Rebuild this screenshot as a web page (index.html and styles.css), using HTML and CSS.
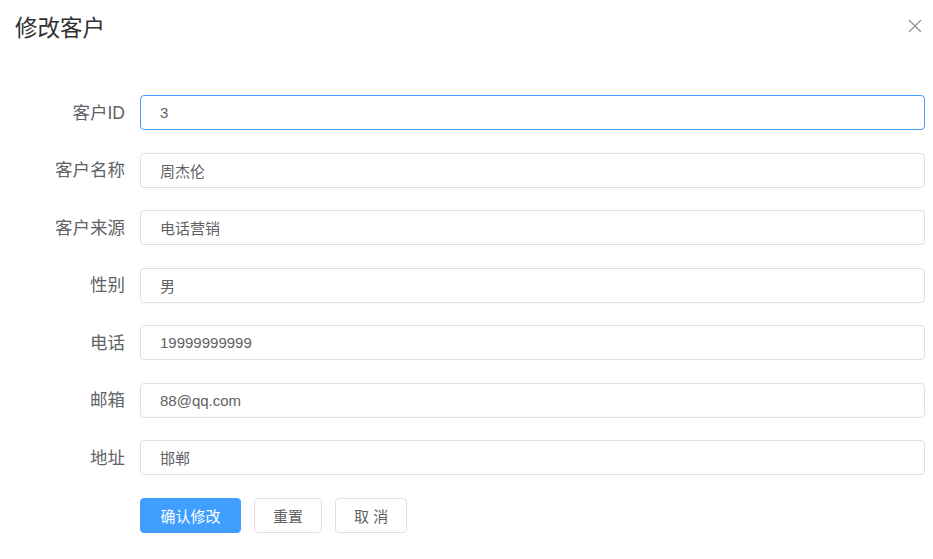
FILE: index.html
```html
<!DOCTYPE html>
<html lang="zh-CN">
<head>
    <meta charset="UTF-8">
    <title>修改客户</title>
    <link rel="stylesheet" href="styles.css">
</head>
<body>
    <div class="dialog">
        <div class="dialogHeader">
            <span class="dialogTitle">修改客户</span>
            <button class="closeBtn" type="button" aria-label="Close">
                <svg width="14" height="14" viewBox="0 0 14 14">
                    <path d="M1 1 L13 13 M13 1 L1 13" stroke="#909399" stroke-width="1.3" fill="none"/>
                </svg>
            </button>
        </div>
        <form class="editForm">
            <div class="formItem">
                <label class="formLabel">客户ID</label>
                <input class="formInput focused" type="text" value="3">
            </div>
            <div class="formItem">
                <label class="formLabel">客户名称</label>
                <input class="formInput" type="text" value="周杰伦">
            </div>
            <div class="formItem">
                <label class="formLabel">客户来源</label>
                <input class="formInput" type="text" value="电话营销">
            </div>
            <div class="formItem">
                <label class="formLabel">性别</label>
                <input class="formInput" type="text" value="男">
            </div>
            <div class="formItem">
                <label class="formLabel">电话</label>
                <input class="formInput" type="text" value="19999999999">
            </div>
            <div class="formItem">
                <label class="formLabel">邮箱</label>
                <input class="formInput" type="text" value="88@qq.com">
            </div>
            <div class="formItem">
                <label class="formLabel">地址</label>
                <input class="formInput" type="text" value="邯郸">
            </div>
            <div class="formItem">
                <span class="formLabel"></span>
                <div class="btnGroup">
                    <button class="btn primary" type="button">确认修改</button>
                    <button class="btn" type="button">重置</button>
                    <button class="btn" type="button">取 消</button>
                </div>
            </div>
        </form>
    </div>
</body>
</html>
```
FILE: styles.css
```css
*{
    margin:0;
    padding:0;
    box-sizing:border-box;
}

body{
    background:#fff;
    font-family:"Liberation Sans","Noto Sans CJK SC",sans-serif;
    color:#606266;
}

.dialog{
    width:933px;
    height:559px;
    background:#fff;
}

.dialogHeader{
    display:flex;
    justify-content:space-between;
    align-items:center;
    padding:13px 10px 0 15px;
    height:44px;
}

.dialogTitle{
    font-size:22.5px;
    line-height:30px;
    color:#303133;
}

.closeBtn{
    border:none;
    background:none;
    width:14px;
    height:14px;
    margin-top:-6px;
    margin-right:1px;
    cursor:pointer;
}

.closeBtn svg{
    display:block;
}

.editForm{
    margin-top:51px;
    padding-right:8px;
}

.formItem{
    display:flex;
    align-items:center;
    height:35px;
    margin-bottom:22.5px;
}

.formLabel{
    width:140px;
    flex-shrink:0;
    padding-right:15px;
    margin-top:-3px;
    text-align:right;
    font-size:17.5px;
    color:#606266;
}

.formInput{
    flex:1;
    height:35px;
    border:1px solid #dcdfe6;
    border-radius:4px;
    padding:0 19px;
    font-family:"Liberation Sans","Noto Sans CJK SC",sans-serif;
    font-size:15px;
    color:#606266;
    outline:none;
    background:#fff;
}

.formInput.focused{
    border-color:#409eff;
}

.btnGroup{
    display:flex;
    gap:13px;
}

.btn{
    height:35px;
    padding:0 18px;
    border:1px solid #dcdfe6;
    border-radius:4px;
    background:#fff;
    color:#606266;
    font-family:"Liberation Sans","Noto Sans CJK SC",sans-serif;
    font-size:15px;
    cursor:pointer;
}

.btn.primary{
    padding:0 19.5px;
    background:#409eff;
    border-color:#409eff;
    color:#fff;
}
```
